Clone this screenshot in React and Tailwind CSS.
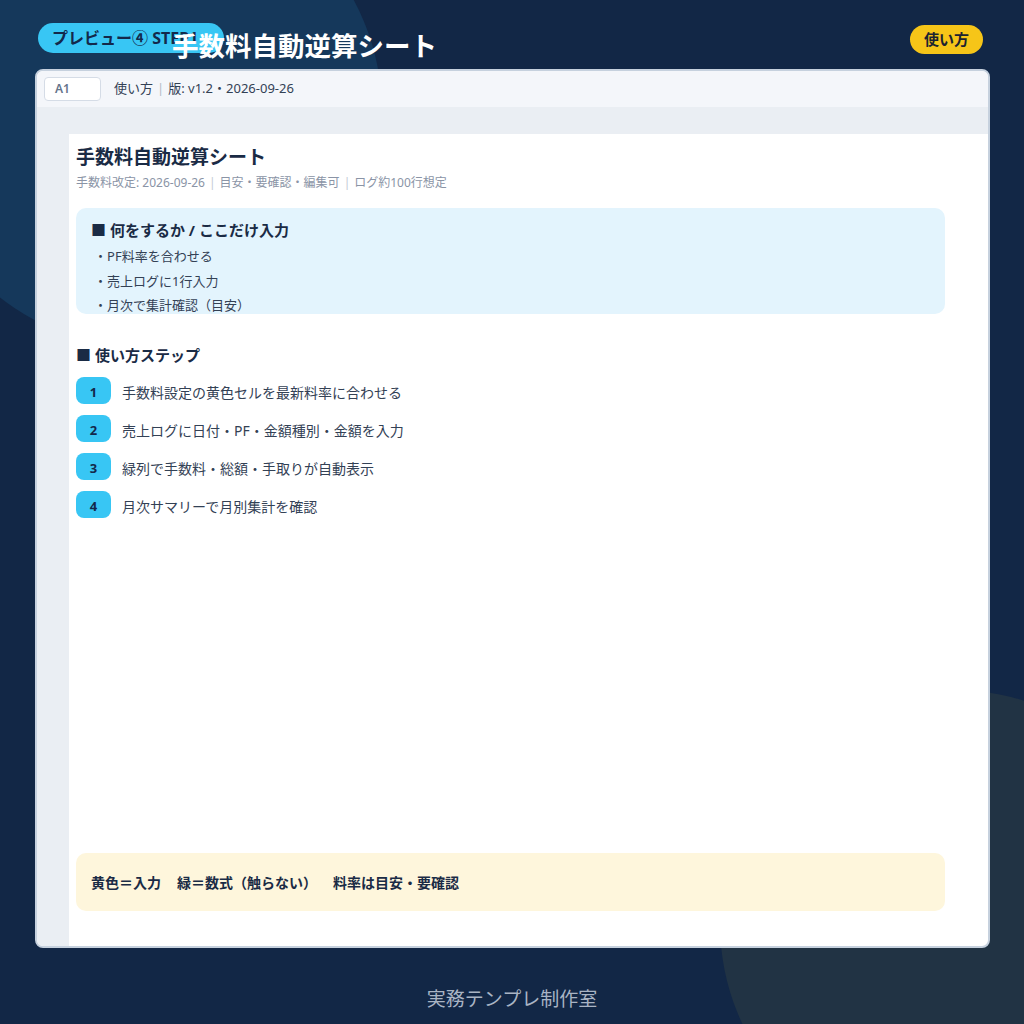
const font = { fontFamily: '"Noto Sans", "Noto Sans CJK JP", sans-serif' };

const bullets = ["PF料率を合わせる", "売上ログに1行入力", "月次で集計確認（目安）"];

const steps = [
  "手数料設定の黄色セルを最新料率に合わせる",
  "売上ログに日付・PF・金額種別・金額を入力",
  "緑列で手数料・総額・手取りが自動表示",
  "月次サマリーで月別集計を確認",
];

function StepRow({ n, text }) {
  return (
    <div className="flex h-[27px] items-center">
      <div className="flex h-[27px] w-[35px] items-center justify-center rounded-[8px] bg-[#38c6f4] pt-[5px] text-[13px] font-bold text-[#13294b]">
        {n}
      </div>
      <div className="ml-[11px] mt-[3px] text-[14px] text-[#334155]">{text}</div>
    </div>
  );
}

export default function App() {
  return (
    <div
      className="relative h-[1024px] w-[1024px] overflow-hidden bg-[#122746]"
      style={font}
    >
      {/* background blobs */}
      <div className="absolute left-[-90px] top-[-124px] h-[472px] w-[472px] rounded-full bg-[#15385b]" />
      <div className="absolute left-[720px] top-[690px] h-[468px] w-[468px] rounded-full bg-[#213344]" />

      <div className="relative flex h-full flex-col">
        {/* header */}
        <div className="flex h-[69px] items-start pl-[38px] pr-[41px] pt-[23px]">
          <div className="flex h-[30px] w-[186px] items-center overflow-hidden whitespace-nowrap rounded-full bg-[#38c6f4] pl-[14px] text-[16px] font-bold text-[#13294b]">
            プレビュー④ STEP1
          </div>
          <div className="relative -ml-[52px] mt-[6px] text-[26.5px] font-bold leading-[34px] text-white">
            手数料自動逆算シート
          </div>
          <div className="ml-auto mt-[2px] flex h-[29px] items-center rounded-full bg-[#f6c518] px-[14px] text-[15px] font-bold text-[#1c2330]">
            使い方
          </div>
        </div>

        {/* sheet window */}
        <div className="ml-[35px] flex h-[879px] w-[955px] flex-col overflow-hidden rounded-[8px] border-2 border-[#c6d1de] bg-white">
          <div className="flex h-[36px] items-center bg-[#f4f6fa] px-[7px]">
            <div className="flex h-[24px] w-[57px] items-center rounded-[4px] border border-[#d5dce6] bg-white pl-[10px] text-[12px] font-semibold text-[#64748b]">
              A1
            </div>
            <div className="ml-[13px] flex items-center text-[13px] text-[#334155]">
              使い方<span className="mx-[4px] text-[#b4bcc8]">|</span>版: v1.2・2026-09-26
            </div>
          </div>
          <div className="h-[27px] bg-[#eaeef3]" />
          <div className="flex flex-1">
            <div className="w-[32px] bg-[#eaeef3]" />
            <div className="flex flex-1 flex-col pl-[7px] pt-[10px]">
              <div className="text-[19px] font-bold leading-[26px] text-[#1a2b45]">
                手数料自動逆算シート
              </div>
              <div className="mt-[4px] flex items-center text-[12px] leading-[18px] text-[#8a94a6]">
                手数料改定: 2026-09-26
                <span className="mx-[4px] text-[#c4cad4]">|</span>
                目安・要確認・編集可
                <span className="mx-[4px] text-[#c4cad4]">|</span>
                ログ約100行想定
              </div>

              <div className="mt-[16px] h-[106px] w-[869px] overflow-hidden rounded-[10px] bg-[#e3f4fd] pl-[15px] pt-[11px]">
                <div className="text-[15px] font-bold leading-[22px] text-[#1a2b45]">
                  ■ 何をするか / ここだけ入力
                </div>
                <div className="mt-[3px] pl-[3px] text-[13px] leading-[24.5px] text-[#334155]">
                  {bullets.map((b) => (
                    <div key={b}>・{b}</div>
                  ))}
                </div>
              </div>

              <div className="mt-[30px] text-[15px] font-bold leading-[22px] text-[#1a2b45]">
                ■ 使い方ステップ
              </div>
              <div className="mt-[11px] flex flex-col gap-[11px]">
                {steps.map((s, i) => (
                  <StepRow key={s} n={i + 1} text={s} />
                ))}
              </div>

              <div className="mb-[35px] mt-auto flex h-[58px] w-[869px] items-center gap-[16px] rounded-[10px] bg-[#fef6dc] pl-[15px] text-[14px] font-bold text-[#1a2b45]">
                <span>黄色＝入力</span>
                <span>緑＝数式（触らない）</span>
                <span>料率は目安・要確認</span>
              </div>
            </div>
          </div>
        </div>

        {/* footer */}
        <div className="mt-[38px] text-center text-[19px] leading-[26px] text-[#a9b4c4]">
          実務テンプレ制作室
        </div>
      </div>
    </div>
  );
}
